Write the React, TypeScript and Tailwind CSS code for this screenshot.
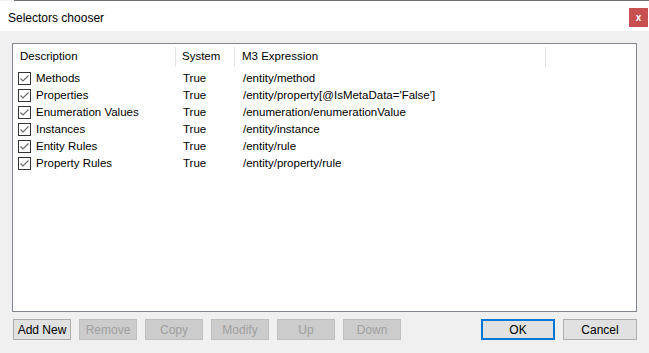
import React from 'react'

const rows = [
  { desc: 'Methods', system: 'True', expr: '/entity/method' },
  { desc: 'Properties', system: 'True', expr: "/entity/property[@IsMetaData='False']" },
  { desc: 'Enumeration Values', system: 'True', expr: '/enumeration/enumerationValue' },
  { desc: 'Instances', system: 'True', expr: '/entity/instance' },
  { desc: 'Entity Rules', system: 'True', expr: '/entity/rule' },
  { desc: 'Property Rules', system: 'True', expr: '/entity/property/rule' },
]

function CheckBox() {
  return (
    <svg width="13" height="13" viewBox="0 0 13 13" className="shrink-0">
      <rect x="0.5" y="0.5" width="12" height="12" fill="#fff" stroke="#333" />
      <path d="M2.5 6.5 L5 9 L10.5 3.5" fill="none" stroke="#6a6a6a" strokeWidth="1.2" />
    </svg>
  )
}

function Btn({ label, disabled, primary, w }: { label: string; disabled?: boolean; primary?: boolean; w: string }) {
  const base = `${w} h-[21px] flex items-center justify-center text-[12px] leading-none`
  if (primary)
    return <div className={`${base} bg-[#e1e1e1] border-2 border-[#0078d7] text-black`}>{label}</div>
  if (disabled)
    return <div className={`${base} bg-[#cccccc] border border-[#bfbfbf] text-[#a0a0a0]`}>{label}</div>
  return <div className={`${base} bg-[#e1e1e1] border border-[#adadad] text-black`}>{label}</div>
}

export default function App() {
  return (
    <div
      className="w-[649px] h-[353px] flex flex-col bg-[#f0f0f0] overflow-hidden"
      style={{ fontFamily: '"Liberation Sans", Arial, sans-serif' }}
    >
      <div className="h-px bg-[#6e6e6e] ml-[14px]" />
      <div className="h-[30px] bg-white flex items-start justify-between pl-[8px] pr-px">
        <span className="text-[12px] mt-[8px] text-black">Selectors chooser</span>
        <div className="w-[19px] h-[19px] mt-[7px] bg-[#c75050] flex items-center justify-center text-white text-[10px] font-bold leading-none">
          x
        </div>
      </div>

      <div className="flex-1 flex flex-col px-[12px] pt-[12px]">
        <div className="h-[269px] border border-[#828790] bg-white text-[11.5px] text-black">
          <div className="grid grid-cols-[163px_59px_311px_1fr] h-[26px] items-center">
            <div className="h-[20px] flex items-center pl-[7px] border-r border-[#e5e5e5]">Description</div>
            <div className="h-[20px] flex items-center pl-[6px] border-r border-[#e5e5e5]">System</div>
            <div className="h-[20px] flex items-center pl-[7px] border-r border-[#e5e5e5]">M3 Expression</div>
            <div />
          </div>
          {rows.map((r) => (
            <div key={r.desc} className="grid grid-cols-[163px_59px_311px_1fr] h-[17px] items-center">
              <div className="flex items-center gap-[5px] pl-[5px]">
                <CheckBox />
                <span>{r.desc}</span>
              </div>
              <div className="pl-[7px]">{r.system}</div>
              <div className="pl-[8px]">{r.expr}</div>
              <div />
            </div>
          ))}
        </div>

        <div className="mt-[7px] flex items-center justify-between pl-px">
          <div className="flex gap-[8px]">
            <Btn label="Add New" w="w-[58px]" />
            <Btn label="Remove" w="w-[58px]" disabled />
            <Btn label="Copy" w="w-[58px]" disabled />
            <Btn label="Modify" w="w-[58px]" disabled />
            <Btn label="Up" w="w-[58px]" disabled />
            <Btn label="Down" w="w-[58px]" disabled />
          </div>
          <div className="flex gap-[8px]">
            <Btn label="OK" w="w-[74px]" primary />
            <Btn label="Cancel" w="w-[74px]" />
          </div>
        </div>
      </div>
    </div>
  )
}
